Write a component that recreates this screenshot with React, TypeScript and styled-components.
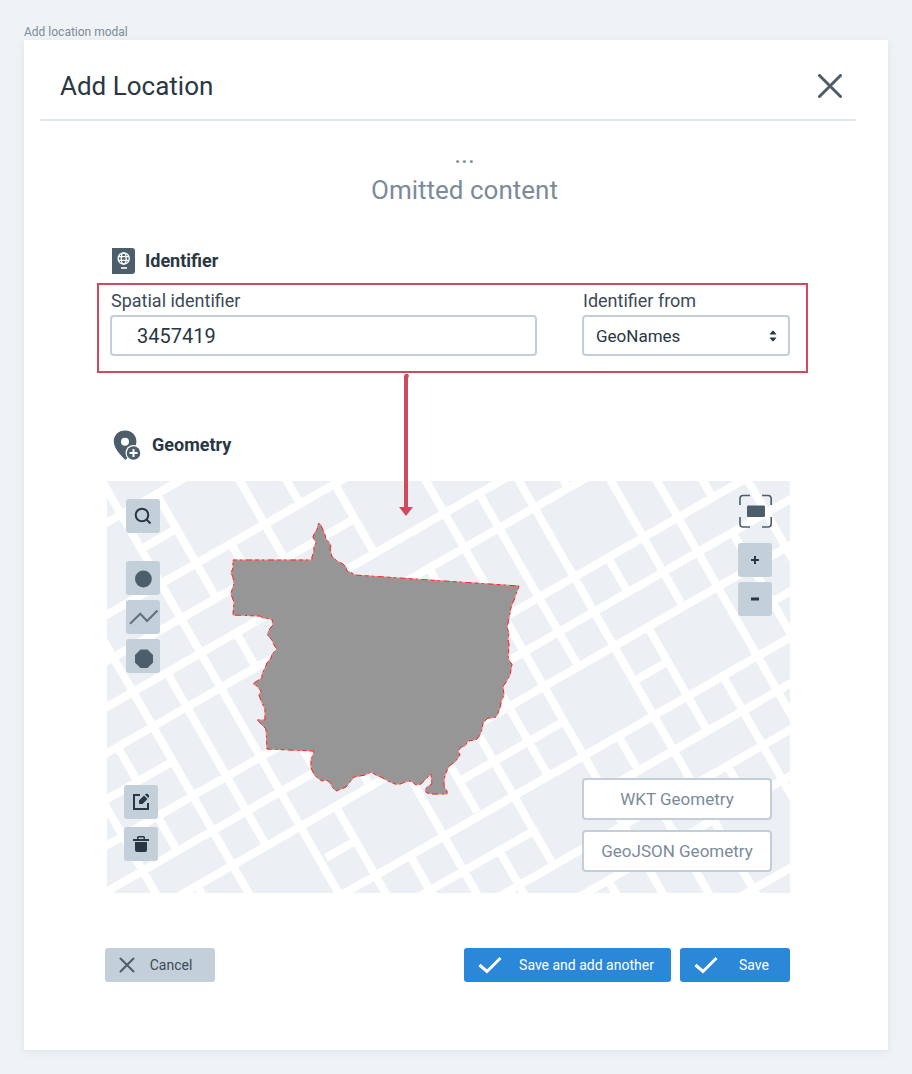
import React from 'react';
import styled, { createGlobalStyle, css } from 'styled-components';

const GlobalStyle = createGlobalStyle`
  * { box-sizing: border-box; }
  body {
    margin: 0;
    background: #eff3f6;
    color: #293742;
    font-family: Roboto, "Liberation Sans", sans-serif;
  }
  button, input, select { font-family: inherit; }
`;

const Page = styled.main`
  padding: 24px;
`;

const Caption = styled.div`
  font-size: 12px;
  line-height: 16px;
  color: #7b8b99;
`;

const Card = styled.section`
  background: #fff;
  padding-bottom: 68px;
  box-shadow: 0 2px 8px rgba(41, 55, 66, 0.08);
`;

const Header = styled.header`
  display: flex;
  align-items: center;
  justify-content: space-between;
  margin: 0 32px 0 16px;
  padding: 12px 10px 0 20px;
  height: 81px;
  border-bottom: 2px solid #dfe6ed;
`;

const Title = styled.h1`
  margin: 0;
  font-size: 26px;
  line-height: 32px;
  font-weight: 400;
`;

const CloseButton = styled.button`
  display: flex;
  padding: 4px;
  border: 0;
  background: none;
  color: #4d5e6b;
`;

const Body = styled.div`
  padding: 0 80px 0 73px;
`;

const Omitted = styled.p`
  margin: 0;
  padding: 15px 0 0 24px;
  font-size: 26px;
  line-height: 36px;
  text-align: center;
  color: #7b8b99;
`;

const SectionTitle = styled.h2<{ $gap: number }>`
  display: flex;
  align-items: center;
  gap: ${(p) => p.$gap}px;
  margin: 0;
  padding-left: 15px;
  height: 28px;
  font-size: 18px;
  line-height: 28px;
  font-weight: 700;
`;

const IdentifierSection = styled.section`
  padding-top: 39px;
`;

const GeometrySection = styled.section`
  padding-top: 58px;
`;

const Highlight = styled.div`
  position: relative;
  display: grid;
  grid-template-columns: 1fr 208px;
  column-gap: 45px;
  margin-top: 8px;
  padding: 4px 16px 15px 11px;
  border: 2px solid #d1495f;
`;

const Arrow = styled.svg`
  position: absolute;
  top: 100%;
  left: 299px;
  z-index: 1;
  pointer-events: none;
`;

const Field = styled.div`
  display: flex;
  flex-direction: column;
  gap: 2px;
`;

const FieldLabel = styled.label`
  padding-left: 1px;
  font-size: 18px;
  line-height: 24px;
  color: #3c4a56;
`;

const controlBox = css`
  width: 100%;
  height: 41px;
  border: 2px solid #c3ced8;
  border-radius: 4px;
  background: #fff;
  color: #293742;
`;

const TextInput = styled.input`
  ${controlBox}
  padding: 0 25px;
  font-size: 20px;
`;

const SelectWrap = styled.div`
  display: grid;
  align-items: center;
  > * { grid-area: 1 / 1; }
  > svg { justify-self: end; margin-right: 13px; pointer-events: none; }
`;

const SelectInput = styled.select`
  ${controlBox}
  appearance: none;
  padding: 0 12px;
  font-size: 17px;
`;

const MapFrame = styled.div`
  display: grid;
  margin: 22px 18px 0 10px;
  height: 412px;
  overflow: hidden;
  background: #ecf0f5;
  > * { grid-area: 1 / 1; min-width: 0; min-height: 0; }
`;

const MapDrawing = styled.svg`
  width: 100%;
  height: 412px;
`;

const MapControls = styled.div`
  display: flex;
  justify-content: space-between;
  padding: 13px 18px 21px 17px;
`;

const ControlColumn = styled.div<{ $end?: boolean }>`
  display: flex;
  flex-direction: column;
  justify-content: space-between;
  align-items: ${(p) => (p.$end ? 'flex-end' : 'flex-start')};
`;

const ControlGroup = styled.div<{ $gap: number }>`
  display: flex;
  flex-direction: column;
  gap: ${(p) => p.$gap}px;
`;

const DrawTools = styled(ControlGroup)`
  padding: 5px 0 0 2px;
`;

const EditTools = styled(ControlGroup)`
  padding-bottom: 11px;
`;

const MapButton = styled.button<{ $plain?: boolean; $spaced?: boolean }>`
  display: flex;
  width: 34px;
  height: 34px;
  padding: 0;
  margin-bottom: ${(p) => (p.$spaced ? 23 : 0)}px;
  border: 0;
  border-radius: 3px;
  background: ${(p) => (p.$plain ? 'none' : '#c3cfd9')};
`;

const FullscreenButton = styled(MapButton)`
  margin-bottom: 10px;
`;

const FormatButton = styled.button`
  height: 42px;
  width: 190px;
  padding: 0;
  border: 2px solid #c3ced8;
  border-radius: 4px;
  background: #fff;
  font-size: 17px;
  color: #7b8b99;
`;

const Footer = styled.footer`
  display: flex;
  justify-content: space-between;
  margin: 55px 18px 0 8px;
`;

const ActionGroup = styled.div`
  display: flex;
  gap: 9px;
`;

const ActionButton = styled.button<{ $primary?: boolean; $wide?: boolean }>`
  display: flex;
  align-items: center;
  width: ${(p) => (p.$wide ? 207 : 110)}px;
  height: 34px;
  padding: 0 ${(p) => (p.$primary ? 0 : 8)}px 0 14px;
  border: 0;
  border-radius: 3px;
  font-size: 14px;
  background: ${(p) => (p.$primary ? '#2b88d9' : '#c3cfd9')};
  color: ${(p) => (p.$primary ? '#fff' : '#3c4a56')};
  > span { flex: 1; text-align: center; }
`;

const INK = '#293742';
const SLATE = '#4d5e6b';

/* Street grid: lines rise at STREET_SLOPE, avenues fall perpendicular to it. */
const STREET_SLOPE = 0.574;
const ORIGIN = { x: 107, y: 481 };
const RIGHT = 790;
const BOTTOM = 893;

type Span = [number, number];

const streets: Array<[number, Span[]]> = [
  [0, [[100, 800]]],
  [1, [[143, 175]]],
  [2, [[100, 800]]],
  [3, [[100, 355]]],
  [4, [[100, 800]]],
  [5, [[100, 800]]],
  [6, [[100, 172]]],
  [7, [[100, 800]]],
  [8, [[100, 800]]],
  [9, [[100, 800]]],
  [10, [[326, 355], [461, 564], [636, 669], [774, 800]]],
  [11, [[100, 800]]],
  [12, [[400, 533], [603, 800]]],
  [13, [[480, 800]]],
  [14, [[560, 800]]],
  [16, [[700, 800]]],
];

const avenues: Array<[number, Span[]]> = [
  [-81, [[470, 900]]],
  [-35, [[745, 781], [816, 850], [886, 900]]],
  [12, [[470, 900]]],
  [57, [[671, 845]]],
  [102, [[470, 900]]],
  [149, [[492, 598], [632, 665], [740, 778], [806, 900]]],
  [195, [[543, 565], [770, 790], [853, 900]]],
  [240, [[470, 900]]],
  [287, [[470, 503], [740, 812], [851, 900]]],
  [333, [[484, 553], [700, 863]]],
  [379, [[568, 777], [877, 900]]],
  [426, [[470, 900]]],
  [472, [[497, 668], [736, 770], [798, 900]]],
  [519, [[470, 900]]],
  [564, [[470, 489], [556, 590], [626, 731], [766, 803]]],
  [611, [[470, 608], [675, 900]]],
  [657, [[470, 900]]],
  [703, [[470, 497], [530, 900]]],
  [748, [[470, 900]]],
];

const streetPath = streets
  .flatMap(([k, spans]) => {
    const y = (x: number) => 522.5 + 46.1 * k - STREET_SLOPE * (x - ORIGIN.x);
    return spans.map(([a, b]) => `M${a} ${y(a)}L${b} ${y(b)}`);
  })
  .join('');

const avenuePath = avenues
  .flatMap(([x0, spans]) => {
    const x = (y: number) => x0 + STREET_SLOPE * (y - ORIGIN.y);
    return spans.map(([a, b]) => `M${x(a)} ${a}L${x(b)} ${b}`);
  })
  .join('');

const region =
  '233,560 312,560 312,557 314,551 314,547 316,543 313,537 315,532 317,530 318,525 319,523 321,525 322,528 325,535 326,539 331,545 330,549 332,557 334,558 337,561 343,564 346,567 347,571 354,574 354,575 519,586 516,594 514,600 511,607 510,613 509,618 507,628 509,633 508,639 509,645 508,657 510,662 512,664 510,675 505,684 503,686 504,695 501,702 500,708 498,713 496,717 492,718 488,718 483,723 482,729 480,735 477,739 474,740 468,741 465,746 461,747 458,751 460,755 455,762 449,766 445,775 444,781 444,787 447,791 447,794 433,794 427,793 425,791 427,787 432,784 431,774 425,780 421,784 416,785 411,781 405,782 400,784 395,784 388,781 383,778 376,775 371,772 365,775 354,777 350,782 346,787 341,789 336,791 332,787 330,782 326,780 322,781 315,776 311,768 311,759 313,755 314,751 267,749 266,729 257,720 265,720 265,709 262,703 259,695 261,691 257,686 253,684 257,681 262,678 262,674 265,668 267,663 271,658 272,654 277,649 274,645 272,640 268,636 268,632 271,627 273,625 272,619 263,618 260,616 233,615 234,602 231,594 232,590 234,584 233,577 231,573 233,568';

const CloseIcon = ({ size, weight }: { size: number; weight: number }) => (
  <svg width={size} height={size} viewBox={`0 0 ${size} ${size}`} fill="none" stroke={SLATE} strokeWidth={weight} strokeLinecap="round" aria-hidden="true">
    <path d={`M1.5 1.5L${size - 1.5} ${size - 1.5}M${size - 1.5} 1.5L1.5 ${size - 1.5}`} />
  </svg>
);

const CheckIcon = () => (
  <svg width="24" height="18" viewBox="0 0 24 18" fill="none" stroke="#fff" strokeWidth="3" aria-hidden="true">
    <path d="M1.5 9L9 15.5L22.5 2" />
  </svg>
);

const Glyph = ({ children }: { children: React.ReactNode }) => (
  <svg width="34" height="34" viewBox="0 0 34 34" fill="none" aria-hidden="true">
    {children}
  </svg>
);

const GlobeBookIcon = () => (
  <svg width="23" height="26" viewBox="0 0 23 26" aria-hidden="true">
    <path d="M0 0H20Q23 0 23 3V23Q23 26 20 26H0Z" fill={SLATE} />
    <g fill="none" stroke="#fff" strokeWidth="1.3">
      <circle cx="11.7" cy="10.5" r="5.6" />
      <ellipse cx="11.7" cy="10.5" rx="2.4" ry="5.6" />
      <path d="M6.6 8.7H16.8M6.6 12.3H16.8" />
      <path d="M9 20H15" strokeWidth="1.6" />
    </g>
  </svg>
);

const PinPlusIcon = () => (
  <svg width="29" height="31" viewBox="-1 0 29 31" aria-hidden="true">
    <path d="M12 0.5C5.6 0.5 0.8 5.2 0.8 11.3C0.8 19 8 25.5 12.5 30C17 25.5 23.4 19 23.4 11.3C23.4 5.2 18.5 0.5 12 0.5Z" fill={SLATE} />
    <circle cx="12" cy="11.7" r="4" fill="#fff" />
    <circle cx="20.5" cy="23" r="8" fill="#fff" />
    <circle cx="20.5" cy="23" r="6.8" fill={SLATE} />
    <path d="M20.5 19V27M16.5 23H24.5" stroke="#fff" strokeWidth="2" />
  </svg>
);

export default function App() {
  return (
    <>
      <GlobalStyle />
      <Page>
        <Caption>Add location modal</Caption>
        <Card>
          <Header>
            <Title>Add Location</Title>
            <CloseButton type="button" aria-label="Close">
              <CloseIcon size={24} weight={3} />
            </CloseButton>
          </Header>
          <Body>
            <Omitted>
              ...
              <br />
              Omitted content
            </Omitted>

            <IdentifierSection>
              <SectionTitle $gap={10}>
                <GlobeBookIcon />
                Identifier
              </SectionTitle>
              <Highlight>
                <Field>
                  <FieldLabel htmlFor="spatial-id">Spatial identifier</FieldLabel>
                  <TextInput id="spatial-id" type="text" defaultValue="3457419" />
                </Field>
                <Field>
                  <FieldLabel htmlFor="id-source">Identifier from</FieldLabel>
                  <SelectWrap>
                    <SelectInput id="id-source" defaultValue="GeoNames">
                      <option>GeoNames</option>
                    </SelectInput>
                    <svg width="8" height="12" viewBox="0 0 8 12" fill={INK} aria-hidden="true">
                      <path d="M4 0.5Q5 1 7.5 4.5H0.5Q3 1 4 0.5ZM4 11.5Q5 11 7.5 7.5H0.5Q3 11 4 11.5Z" />
                    </svg>
                  </SelectWrap>
                </Field>
                <Arrow width="16" height="145" viewBox="0 0 16 145" aria-hidden="true">
                  <path d="M6 6Q6 3 8 3H10L11 5L10 7V136H15L8 145L1 136H6Z" fill="#d1495f" />
                </Arrow>
              </Highlight>
            </IdentifierSection>

            <GeometrySection>
              <SectionTitle $gap={11}>
                <PinPlusIcon />
                Geometry
              </SectionTitle>
              <MapFrame>
                <MapDrawing
                  viewBox={`${ORIGIN.x} ${ORIGIN.y} ${RIGHT - ORIGIN.x} ${BOTTOM - ORIGIN.y}`}
                  preserveAspectRatio="xMidYMid slice"
                  role="img"
                  aria-label="Map of the location"
                >
                  <path d={streetPath + avenuePath} fill="none" stroke="#fff" strokeWidth="8" />
                  <polygon points={region} fill="#969696" />
                  <polygon points={region} fill="none" stroke="#f08a8a" strokeWidth="1" />
                  <polygon points={region} fill="none" stroke="#e82c2c" strokeWidth="1" strokeDasharray="4 3 2 4 6 3" />
                </MapDrawing>
                <MapControls>
                  <ControlColumn>
                    <DrawTools $gap={5}>
                      <MapButton type="button" aria-label="Search" $spaced>
                        <Glyph>
                          <circle cx="16" cy="16" r="6.3" stroke={INK} strokeWidth="2" />
                          <path d="M20.5 20.5L24.5 24.5" stroke={INK} strokeWidth="2" />
                        </Glyph>
                      </MapButton>
                      <MapButton type="button" aria-label="Draw point">
                        <Glyph>
                          <circle cx="17.4" cy="18" r="8.4" fill={SLATE} />
                        </Glyph>
                      </MapButton>
                      <MapButton type="button" aria-label="Draw line">
                        <Glyph>
                          <path d="M4 23.7L14.3 13.7L21 21L31.5 10.5" stroke="#5f717f" strokeWidth="2" />
                        </Glyph>
                      </MapButton>
                      <MapButton type="button" aria-label="Draw polygon">
                        <Glyph>
                          <path d="M14.5 10.5H21.5L27 16V23.5L21.5 29H14.5L9 23.5V16Z" fill={SLATE} />
                        </Glyph>
                      </MapButton>
                    </DrawTools>
                    <EditTools $gap={8}>
                      <MapButton type="button" aria-label="Edit">
                        <Glyph>
                          <path d="M16 10H10V24H24V18" stroke={INK} strokeWidth="2" />
                          <path d="M15 19V15.5L20 10.500L23.500 14L18.500 19ZM21 9.600L22 8.800H23.600L25 10.400V12L24.300 13Z" fill={INK} />
                        </Glyph>
                      </MapButton>
                      <MapButton type="button" aria-label="Delete">
                        <Glyph>
                          <path d="M9 12H13V10.5Q13 9 14.5 9H19.5Q21 9 21 10.5V12H25V14H9ZM14.5 12H19.5V10.5H14.5ZM11 15H23V23Q23 25 21 25H13Q11 25 11 23Z" fill={INK} fillRule="evenodd" />
                        </Glyph>
                      </MapButton>
                    </EditTools>
                  </ControlColumn>
                  <ControlColumn $end>
                    <ControlGroup $gap={5}>
                      <FullscreenButton type="button" aria-label="Fit to view" $plain>
                        <Glyph>
                          <path d="M2 11V5Q2 1.500 5 1.500H12M24 1.500H30Q33.200 1.500 33.200 5V11M33.200 23V30Q33.200 33 30 33H24M12 33H5Q2 33 2 30V23" stroke={SLATE} strokeWidth="1.6" />
                          <rect x="9" y="11.5" width="18" height="11.5" rx="1" fill={SLATE} />
                        </Glyph>
                      </FullscreenButton>
                      <MapButton type="button" aria-label="Zoom in">
                        <Glyph>
                          <path d="M13 17H21M17 13V21" stroke={INK} strokeWidth="2" />
                        </Glyph>
                      </MapButton>
                      <MapButton type="button" aria-label="Zoom out">
                        <Glyph>
                          <path d="M13 17H21" stroke={INK} strokeWidth="3" />
                        </Glyph>
                      </MapButton>
                    </ControlGroup>
                    <ControlGroup $gap={10}>
                      <FormatButton type="button">WKT Geometry</FormatButton>
                      <FormatButton type="button">GeoJSON Geometry</FormatButton>
                    </ControlGroup>
                  </ControlColumn>
                </MapControls>
              </MapFrame>
            </GeometrySection>

            <Footer>
              <ActionButton type="button">
                <CloseIcon size={16} weight={2} />
                <span>Cancel</span>
              </ActionButton>
              <ActionGroup>
                <ActionButton type="button" $primary $wide>
                  <CheckIcon />
                  <span>Save and add another</span>
                </ActionButton>
                <ActionButton type="button" $primary>
                  <CheckIcon />
                  <span>Save</span>
                </ActionButton>
              </ActionGroup>
            </Footer>
          </Body>
        </Card>
      </Page>
    </>
  );
}
